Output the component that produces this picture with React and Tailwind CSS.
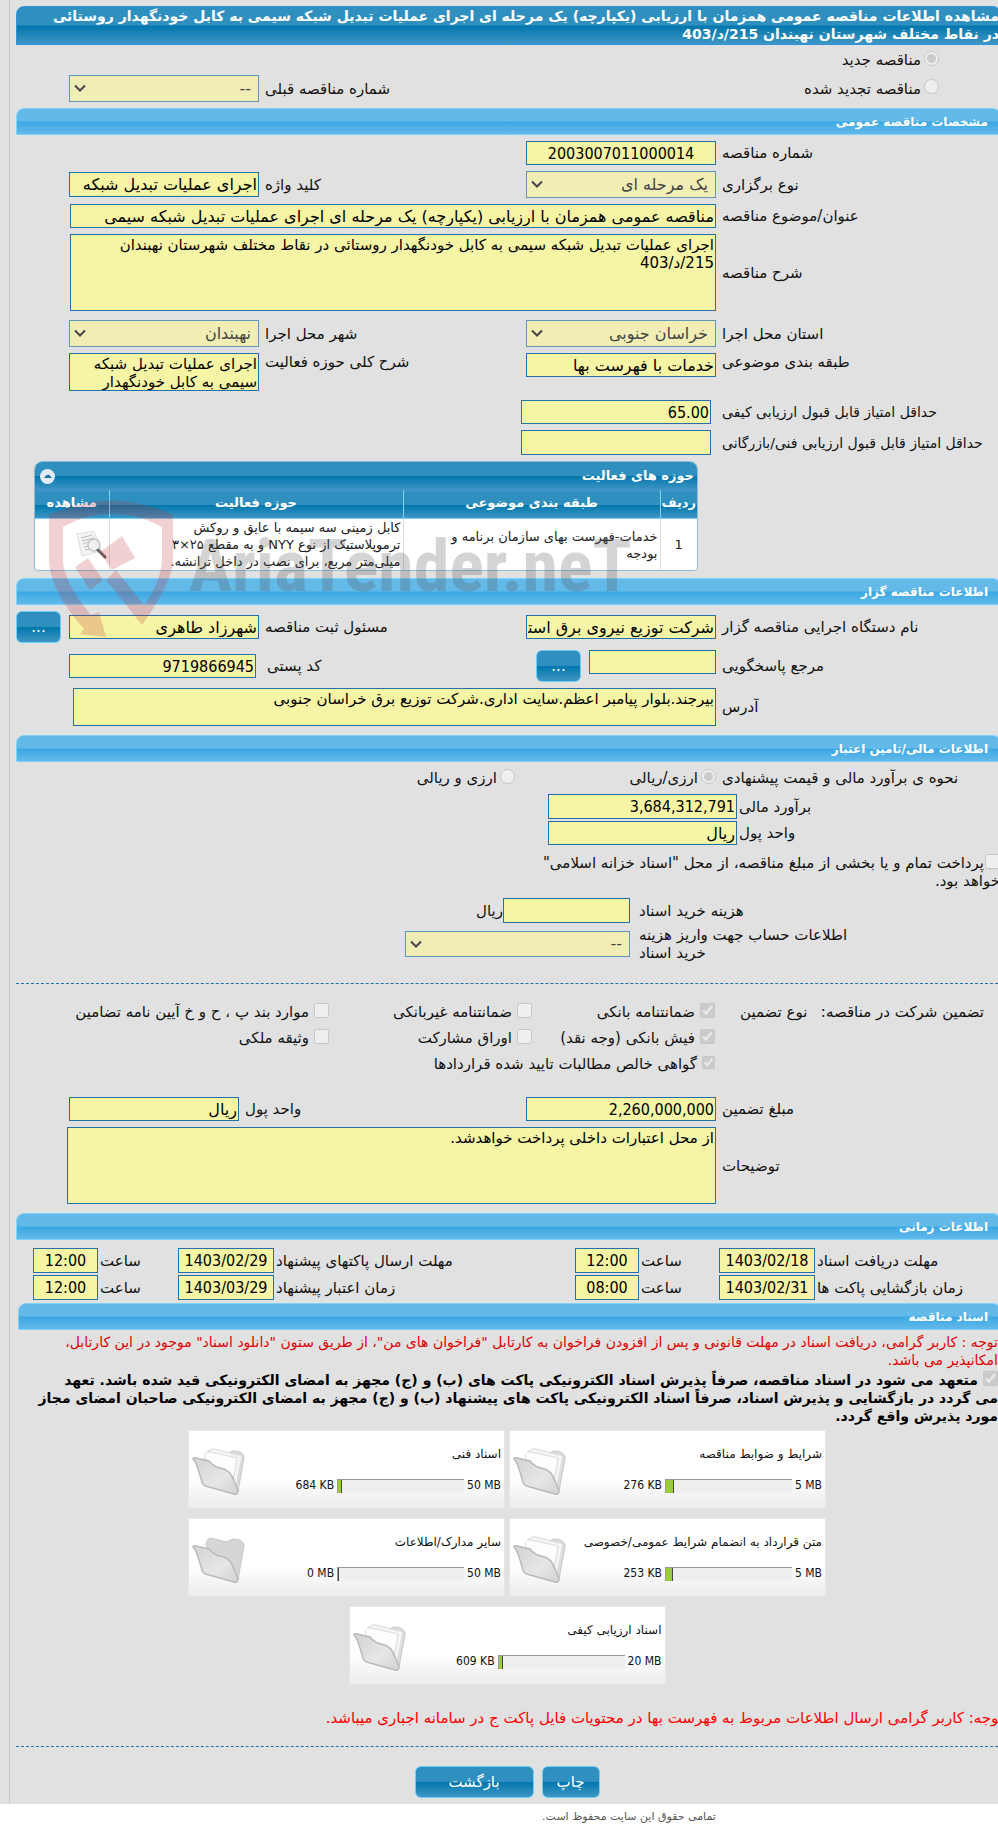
const grid = "grid grid-cols-[1fr_190px_267px_190px] items-center pl-[53px]";
const fieldBase =
  "block w-full border border-[#2272a8] bg-[#f6f4a5] text-black rounded-none px-px overflow-hidden";
const lightBar =
  "border border-[#7dd4f8] bg-[linear-gradient(to_bottom,#63b9e8_0%,#63b9e8_48%,#3ba8e2_52%,#62b9ea_100%)]";
const darkBar =
  "bg-[linear-gradient(to_bottom,#2f90bf_0%,#2f90bf_48%,#0277ae_52%,#4096c3_100%)]";

function SectionBar({ children }) {
  return (
    <h2
      className={`${lightBar} -mr-[3px] h-[27px] rounded-t-lg pr-3 pt-px text-[12px] leading-[24px] font-bold text-white`}
    >
      {children}
    </h2>
  );
}

function Label({ htmlFor, children, className = "pl-[6px]" }) {
  return (
    <label htmlFor={htmlFor} className={`block text-left whitespace-nowrap ${className}`}>
      {children}
    </label>
  );
}

function Field({ id, value = "", center = false, className = "h-6" }) {
  // digits read better in the condensed face
  const numeric = /^[\d.,:/]+$/.test(value);
  return (
    <input
      id={id}
      type="text"
      readOnly
      value={value}
      className={`${fieldBase} text-[16px] ${numeric ? "font-['DejaVu_Sans_Condensed','DejaVu_Sans',sans-serif]" : ""} ${center ? "text-center" : ""} ${className}`}
    />
  );
}

function Area({ id, value, className }) {
  return (
    <textarea
      id={id}
      readOnly
      value={value}
      className={`${fieldBase} resize-none pt-px leading-[18px] ${className}`}
    />
  );
}

function SelectBox({ id, value, className = "h-[27px]" }) {
  return (
    <div className="relative">
      <select
        id={id}
        disabled
        defaultValue={value}
        className={`block w-full appearance-none border border-[#5f97b8] bg-[#f0eeb4] pr-[7px] text-[16px] text-[#444] ${className}`}
      >
        <option>{value}</option>
      </select>
      <svg
        className="pointer-events-none absolute left-[5px] top-[9px]"
        width="12"
        height="9"
        viewBox="0 0 12 9"
        fill="none"
        stroke="#444"
        strokeWidth="2"
      >
        <path d="M1 1.5 L6 6.5 L11 1.5" />
      </svg>
    </div>
  );
}

function Radio({ name, checked, children }) {
  return (
    <label className="flex items-center gap-[3px] whitespace-nowrap">
      <input type="radio" name={name} disabled defaultChecked={checked} className="mb-1 size-[15px]" />
      {children}
    </label>
  );
}

function Check({ checked, children }) {
  return (
    <label className="flex items-center gap-[5px] whitespace-nowrap">
      <input type="checkbox" disabled defaultChecked={checked} className="mb-1 size-[15px]" />
      {children}
    </label>
  );
}

function BlueButton({ children, className }) {
  return (
    <button
      type="button"
      className={`${darkBar} h-8 rounded-md border border-[#6ccdf5] text-[15px] text-white ${className}`}
    >
      {children}
    </button>
  );
}

function Folder({ empty }) {
  return (
    <svg width="54" height="50" viewBox="0 0 54 50">
      <defs>
        <linearGradient id="folderFront" x1="0" y1="0" x2="1" y2="1">
          <stop offset="0" stopColor="#d2d2d2" />
          <stop offset="0.6" stopColor="#e6e6e6" />
          <stop offset="1" stopColor="#d2d2d2" />
        </linearGradient>
      </defs>
      <path
        d="M14 8 L15 5 Q16 2 19 2 L34 6 L41 3 Q52 3 52 10 L46 43 Q45 47 42 45 L20 35 Z"
        fill={empty ? "#d6d6d6" : "#dcdcdc"}
        stroke="#c6c6c6"
      />
      {!empty && (
        <g stroke="#dcdcdc" strokeWidth="1">
          <path d="M17 3 Q19 0 23 1 L50 8 L44 38 L20 30 Z" fill="#f4f4f4" />
          <path d="M12 7 Q14 3 18 4 L45 10 L40 40 L16 28 Z" fill="#fdfdfd" />
        </g>
      )}
      <path
        d="M1 11 Q1 9 4 10 L17 13 Q22 19 28 20 Q39 22 42 33 L46 43 Q46 47 42 46 L17 39 Q11 38 10 34 L6 21 Q4 14 1 11 Z"
        fill="url(#folderFront)"
        stroke="#b9b9b9"
        strokeWidth="1.4"
      />
    </svg>
  );
}

const files = [
  { title: "شرایط و ضوابط مناقصه", max: "5 MB", used: "276 KB", fill: 7 },
  { title: "اسناد فنی", max: "50 MB", used: "684 KB", fill: 3 },
  { title: "متن قرارداد به انضمام شرایط عمومی/خصوصی", max: "5 MB", used: "253 KB", fill: 6 },
  { title: "سایر مدارک/اطلاعات", max: "50 MB", used: "0 MB", fill: 0 },
  { title: "اسناد ارزیابی کیفی", max: "20 MB", used: "609 KB", fill: 3 },
];

function FileCard({ file }) {
  return (
    <div className="flex h-[79px] w-[317px] justify-between border border-[#e6e6e6] bg-linear-to-b from-white from-60% to-[#ececec]">
      <div className="w-[240px] pr-[3px] pt-[15px] text-[12px] leading-[17px]">
        <p className="whitespace-nowrap">{file.title}</p>
        <div className="mt-[14px] flex items-center gap-[3px] whitespace-nowrap font-['DejaVu_Sans_Condensed','DejaVu_Sans',sans-serif]">
          <span dir="ltr">{file.max}</span>
          <div dir="ltr" className="flex h-[14px] w-[127px] border-l border-t border-[#999] bg-[#eee]">
            <div
              className="border-r border-[#444] bg-[#9acd32]"
              style={{ width: `${file.fill + 1}px` }}
            />
          </div>
          <span dir="ltr">{file.used}</span>
        </div>
      </div>
      <div className="pl-[3px] pt-[17px]">
        <Folder empty={file.fill === 0} />
      </div>
    </div>
  );
}

function Watermark() {
  return (
    <div dir="ltr" className="pointer-events-none absolute left-[15px] top-[39px] flex">
      <svg width="126" height="138" viewBox="0 0 126 138" fill="#c1272d" fillOpacity="0.22">
        <path d="M0 15 Q63 -14 124 15 L124 62 Q122 84 93 125 L57 80 L67 70 L95 105 Q111 84 113 62 L113 27 Q63 0 14 27 L14 62 Q16 84 42 115 L50 112 L57 137 L31 134 L35 129 Q2 92 0 62 Z" />
        <path d="M26 67 L39 58 L54 80 L41 90 Z" />
        <path d="M51 52 L73 36 L86 58 L63 70 Z" />
      </svg>
      <span className="ml-[14px] mt-[22px] font-['Roboto_Condensed','Roboto',sans-serif] text-[72px] leading-[90px] font-bold text-[#555]/25">
        AriaTender.neT
      </span>
    </div>
  );
}

function ActivityTable() {
  const th = "border-l border-[#7dd4f8] pb-[3px] font-bold last:border-l-0";
  const td = "border-l border-[#ddd] px-[2px] last:border-l-0";
  return (
    <div className="relative ml-[18px] mr-auto mt-[6px] w-[664px]">
      <div className="overflow-hidden rounded-t-lg rounded-b border border-[#8dbcd8] bg-white">
        <div className={`${darkBar} flex h-[28px] items-center justify-between pl-[5px] pr-[3px] text-[13px] font-bold text-white`}>
          <span>حوزه های فعالیت</span>
          <button
            type="button"
            aria-label="بستن"
            className="flex size-[15px] items-center justify-center rounded-full bg-[#e2ecf8]"
          >
            <svg width="8" height="5" viewBox="0 0 8 5" fill="#2272a8">
              <path d="M0 4 Q4 -3 8 4 Z" />
            </svg>
          </button>
        </div>
        <table className="w-full table-fixed">
          <thead>
            <tr className={`${darkBar} h-7 border-y border-t-[#3b90d0] border-b-[#7dd4f8] text-[13px] leading-[18px] text-white`}>
              <th className={`${th} w-[37px]`}>ردیف</th>
              <th className={`${th} w-[257px]`}>طبقه بندی موضوعی</th>
              <th className={`${th} w-[294px]`}>حوزه فعالیت</th>
              <th className={th}>مشاهده</th>
            </tr>
          </thead>
          <tbody>
            <tr className="h-[51px] text-[13px] leading-[17px] text-[#222]">
              <td className={`${td} text-center`}>1</td>
              <td className={`${td} pl-[30px]`}>خدمات-فهرست بهای سازمان برنامه و بودجه</td>
              <td className={`${td} whitespace-nowrap`}>
                کابل زمینی سه سیمه با عایق و روکش
                <br />
                ترموپلاستیک از نوع NYY و به مقطع ۲۵×۳
                <br />
                میلی‌متر مربع، برای نصب در داخل ترانشه.
              </td>
              <td className={td}>
                <svg width="32" height="30" viewBox="0 0 32 30">
                  <path d="M2 4 L19 1 L26 21 L7 26 Z" fill="#f4f4f4" stroke="#dedede" />
                  <path
                    d="M6 8 L17 5 M7 11 L19 8 M8 14 L14 12 M9 17 L14 16 M10 20 L15 19"
                    stroke="#bbb"
                  />
                  <circle cx="19" cy="15" r="6" fill="#f0f0f0" fillOpacity="0.8" stroke="#c4c4c4" strokeWidth="1.5" />
                  <path d="M23 20 L30 27" stroke="#6b6262" strokeWidth="3" strokeLinecap="round" />
                </svg>
              </td>
            </tr>
          </tbody>
        </table>
      </div>
      <Watermark />
    </div>
  );
}

const dates = [
  ["مهلت دریافت اسناد", "1403/02/18", "12:00", "مهلت ارسال پاکتهای پیشنهاد", "1403/02/29", "12:00"],
  ["زمان بازگشایی پاکت ها", "1403/02/31", "08:00", "زمان اعتبار پیشنهاد", "1403/03/29", "12:00"],
];

function DateRow({ row, index }) {
  const id = `date${index}`;
  return (
    <div className="grid grid-cols-[1fr_96px_80px_64px_301px_96px_80px_65px] items-center pl-[17px]">
      <Label htmlFor={`${id}a`} className="pl-[2px]">{row[0]}</Label>
      <Field id={`${id}a`} value={row[1]} center className="h-[25px]" />
      <Label htmlFor={`${id}b`} className="pl-[2px]">ساعت</Label>
      <Field id={`${id}b`} value={row[2]} center className="h-[25px]" />
      <Label htmlFor={`${id}c`} className="pl-[2px]">{row[3]}</Label>
      <Field id={`${id}c`} value={row[4]} center className="h-[25px]" />
      <Label htmlFor={`${id}d`} className="pl-[2px]">ساعت</Label>
      <Field id={`${id}d`} value={row[5]} center className="h-[25px]" />
    </div>
  );
}

function App() {
  return (
    <div
      dir="rtl"
      className="overflow-hidden bg-[#e1e1e1] font-['DejaVu_Sans',sans-serif] text-[15px] leading-[18px] text-[#111]"
    >
      <main className="ml-[9px] border-l border-[#c8c8c8] pb-[6px] pl-[6px] pt-[6px]">
        <h1
          className={`${darkBar} -mr-[3px] h-[39px] rounded-t-lg border border-[#2c93dd] pr-px text-[14px] leading-[18px] font-bold whitespace-nowrap text-white`}
        >
          مشاهده اطلاعات مناقصه عمومی همزمان با ارزیابی (یکپارچه) یک مرحله ای اجرای عملیات تبدیل شبکه سیمی به کابل خودنگهدار روستائی
          <br />
          در نقاط مختلف شهرستان نهبندان 215/د/403
        </h1>

        <div className="flex h-[30px] items-center pr-[59px]">
          <Radio name="kind" checked>مناقصه جدید</Radio>
        </div>
        <div className={`${grid} h-[26px]`}>
          <div className="pr-[59px]">
            <Radio name="kind">مناقصه تجدید شده</Radio>
          </div>
          <span />
          <Label htmlFor="prev">شماره مناقصه قبلی</Label>
          <SelectBox id="prev" value="--" />
        </div>

        <div className="mt-[7px]">
          <SectionBar>مشخصات مناقصه عمومی</SectionBar>
        </div>
        <div className="mt-[6px] flex flex-col gap-[6px]">
          <div className={grid}>
            <Label htmlFor="number">شماره مناقصه</Label>
            <Field id="number" value="2003007011000014" center />
          </div>
          <div className={grid}>
            <Label htmlFor="method">نوع برگزاری</Label>
            <SelectBox id="method" value="یک مرحله ای" />
            <Label htmlFor="keyword">کلید واژه</Label>
            <Field id="keyword" value="اجرای عملیات تبدیل شبکه" className="h-[25px]" />
          </div>
          <div className={grid}>
            <Label htmlFor="subject">عنوان/موضوع مناقصه</Label>
            <div className="col-span-3 pl-px">
              <Field
                id="subject"
                value="مناقصه عمومی همزمان با ارزیابی (یکپارچه) یک مرحله ای اجرای عملیات تبدیل شبکه سیمی"
              />
            </div>
          </div>
          <div className={grid}>
            <Label htmlFor="description">شرح مناقصه</Label>
            <div className="col-span-3 pl-px">
              <Area
                id="description"
                className="h-[77px]"
                value={
                  "اجرای عملیات تبدیل شبکه سیمی به کابل خودنگهدار روستائی در نقاط مختلف شهرستان نهبندان\n215/د/403"
                }
              />
            </div>
          </div>
        </div>
        <div className={`${grid} mt-[9px]`}>
          <Label htmlFor="province">استان محل اجرا</Label>
          <SelectBox id="province" value="خراسان جنوبی" />
          <Label htmlFor="city">شهر محل اجرا</Label>
          <SelectBox id="city" value="نهبندان" />
        </div>
        <div className="mt-[6px] grid grid-cols-[1fr_190px_267px_190px] items-start pl-[53px]">
          <Label htmlFor="category">طبقه بندی موضوعی</Label>
          <Field id="category" value="خدمات با فهرست بها" />
          <Label htmlFor="scope">شرح کلی حوزه فعالیت</Label>
          <Area
            id="scope"
            className="h-[38px]"
            value={"اجرای عملیات تبدیل شبکه\nسیمی به کابل خودنگهدار"}
          />
        </div>
        <div className="mt-[9px] flex flex-col gap-[6px]">
          <div className="grid grid-cols-[1fr_190px] items-center pl-[505px]">
            <Label htmlFor="quality" className="pl-[11px] text-[14px]">حداقل امتیاز قابل قبول ارزیابی کیفی</Label>
            <Field id="quality" value="65.00" />
          </div>
          <div className="grid grid-cols-[1fr_190px] items-center pl-[505px]">
            <Label htmlFor="technical" className="pl-[11px] text-[14px]">
              حداقل امتیاز قابل قبول ارزیابی فنی/بازرگانی
            </Label>
            <Field id="technical" className="h-[25px]" />
          </div>
        </div>

        <ActivityTable />

        <div className="mt-[7px]">
          <SectionBar>اطلاعات مناقصه گزار</SectionBar>
        </div>
        <div className="mt-[6px] grid grid-cols-[1fr_190px_267px_190px_53px] items-center">
          <Label htmlFor="agency">نام دستگاه اجرایی مناقصه گزار</Label>
          <Field id="agency" value="شرکت توزیع نیروی برق استان خراسان جنوبی" />
          <Label htmlFor="registrar">مسئول ثبت مناقصه</Label>
          <Field id="registrar" value="شهرزاد طاهری" />
          <BlueButton className="mr-auto w-[45px]">...</BlueButton>
        </div>
        <div className={`${grid} mt-[7px]`}>
          <Label htmlFor="contact">مرجع پاسخگویی</Label>
          <div className="flex items-start gap-2">
            <div className="w-[127px]">
              <Field id="contact" />
            </div>
            <BlueButton className="w-[45px]">...</BlueButton>
          </div>
          <Label htmlFor="postal" className="pl-[8px]">کد پستی</Label>
          <div className="pr-[3px]">
            <Field id="postal" value="9719866945" />
          </div>
        </div>
        <div className={`${grid} mt-[6px]`}>
          <Label htmlFor="address">آدرس</Label>
          <div className="col-span-3 pl-1">
            <Area
              id="address"
              className="h-[38px]"
              value="بیرجند.بلوار پیامبر اعظم.سایت اداری.شرکت توزیع برق خراسان جنوبی"
            />
          </div>
        </div>

        <div className="mt-[9px]">
          <SectionBar>اطلاعات مالی/تامین اعتبار</SectionBar>
        </div>
        <div className="grid h-8 grid-cols-[1fr_201px_301px] items-center pl-[198px]">
          <span className="pl-[6px] text-left">نحوه ی برآورد مالی و قیمت پیشنهادی</span>
          <Radio name="estimate" checked>ارزی/ریالی</Radio>
          <Radio name="estimate">ارزی و ریالی</Radio>
        </div>
        <div className="flex flex-col gap-[2px] pl-[532px]">
          <div className="grid grid-cols-[1fr_189px] items-center">
            <Label htmlFor="estimate" className="pl-[2px]">برآورد مالی</Label>
            <Field id="estimate" value="3,684,312,791" className="h-[25px]" />
          </div>
          <div className="grid grid-cols-[1fr_189px] items-center">
            <Label htmlFor="currency" className="pl-[2px]">واحد پول</Label>
            <Field id="currency" value="ریال" />
          </div>
        </div>
        <label className="-mr-[2px] mt-[9px] block whitespace-nowrap">
          <input type="checkbox" disabled className="ml-px size-[15px] align-[-1px]" />
          پرداخت تمام و یا بخشی از مبلغ مناقصه، از محل "اسناد خزانه اسلامی"
          <br />
          خواهد بود.
        </label>
        <div className="mt-[8px] flex items-center">
          <Label htmlFor="fee" className="flex-1 pl-[9px]">هزینه خرید اسناد</Label>
          <div className="w-[127px]">
            <Field id="fee" className="h-[25px]" />
          </div>
          <span className="w-[487px]">ریال</span>
        </div>
        <div className="mt-[3px] flex items-center pl-[389px]">
          <Label htmlFor="account" className="flex-1 pl-[9px]">
            اطلاعات حساب جهت واریز هزینه
            <br />
            خرید اسناد
          </Label>
          <div className="w-[225px]">
            <SelectBox id="account" value="--" className="h-[26px]" />
          </div>
        </div>

        <hr className="mt-[21px] border-t border-dashed border-[#2272a8]" />

        <div className="mt-[15px] grid auto-rows-[26px] grid-cols-[1fr_183px_203px_313px] items-center">
          <div className="flex justify-between whitespace-nowrap pl-[25px] pr-[14px]">
            <span>تضمین شرکت در مناقصه:</span>
            <span>نوع تضمین</span>
          </div>
          <Check checked>ضمانتنامه بانکی</Check>
          <Check>ضمانتنامه غیربانکی</Check>
          <Check>موارد بند پ ، ح و خ آیین نامه تضامین</Check>
          <span />
          <Check checked>فیش بانکی (وجه نقد)</Check>
          <Check>اوراق مشارکت</Check>
          <Check>وثیقه ملکی</Check>
          <span />
          <Check checked>گواهی خالص مطالبات تایید شده قراردادها</Check>
        </div>

        <div className="mt-[20px] grid grid-cols-[1fr_190px_287px_170px] items-center pl-[53px]">
          <Label htmlFor="guarantee">مبلغ تضمین</Label>
          <Field id="guarantee" value="2,260,000,000" />
          <Label htmlFor="guaranteeCurrency">واحد پول</Label>
          <Field id="guaranteeCurrency" value="ریال" />
        </div>
        <div className="mt-[6px] grid grid-cols-[1fr_649px] items-center pl-[51px]">
          <Label htmlFor="notes">توضیحات</Label>
          <Area id="notes" className="h-[77px]" value="از محل اعتبارات داخلی پرداخت خواهدشد." />
        </div>

        <div className="mt-[9px]">
          <SectionBar>اطلاعات زمانی</SectionBar>
        </div>
        <div className="mt-[8px] flex flex-col gap-[2px]">
          {dates.map((row, index) => (
            <DateRow key={row[0]} row={row} index={index} />
          ))}
        </div>

        <div className="mt-[3px] pl-[2px]">
          <SectionBar>اسناد مناقصه</SectionBar>
        </div>
        <p className="mt-[3px] text-[14px] text-[#e00000]">
          توجه : کاربر گرامی، دریافت اسناد در مهلت قانونی و پس از افزودن فراخوان به کارتابل "فراخوان های من"، از طریق ستون "دانلود اسناد" موجود در این کارتابل،
          <br />
          امکانپذیر می باشد.
        </p>
        <label className="mt-[2px] block text-[14px] font-bold whitespace-nowrap text-black">
          <input type="checkbox" disabled defaultChecked className="ml-[5px] size-[15px] align-[-1px]" />
          متعهد می شود در اسناد مناقصه، صرفاً پذیرش اسناد الکترونیکی پاکت های (ب) و (ج) مجهز به امضای الکترونیکی قید شده باشد. تعهد
          <br />
          می گردد در بازگشایی و پذیرش اسناد، صرفاً اسناد الکترونیکی پاکت های پیشنهاد (ب) و (ج) مجهز به امضای الکترونیکی صاحبان امضای مجاز
          <br />
          مورد پذیرش واقع گردد.
        </label>

        <div className="mx-auto mt-[5px] flex max-w-[640px] flex-wrap justify-center gap-x-1 gap-y-[9px]">
          {files.map((file) => (
            <FileCard key={file.title} file={file} />
          ))}
        </div>

        <p className="-mr-[5px] mt-[24px] whitespace-nowrap text-[#ff0000]">
          توجه: کاربر گرامی ارسال اطلاعات مربوط به فهرست بها در محتویات فایل پاکت ج در سامانه اجباری میباشد.
        </p>
        <hr className="mt-[19px] border-t border-dashed border-[#2272a8]" />
        <div className="mt-[19px] flex justify-center gap-2">
          <BlueButton className="w-[58px]">چاپ</BlueButton>
          <BlueButton className="w-[119px]">بازگشت</BlueButton>
        </div>
      </main>
      <footer className="h-[21px] overflow-hidden bg-white pl-[260px] pt-[5px] text-center text-[11px] leading-[16px] text-[#555]">
        تمامی حقوق این سایت محفوظ است.
      </footer>
    </div>
  );
}

export default App;
